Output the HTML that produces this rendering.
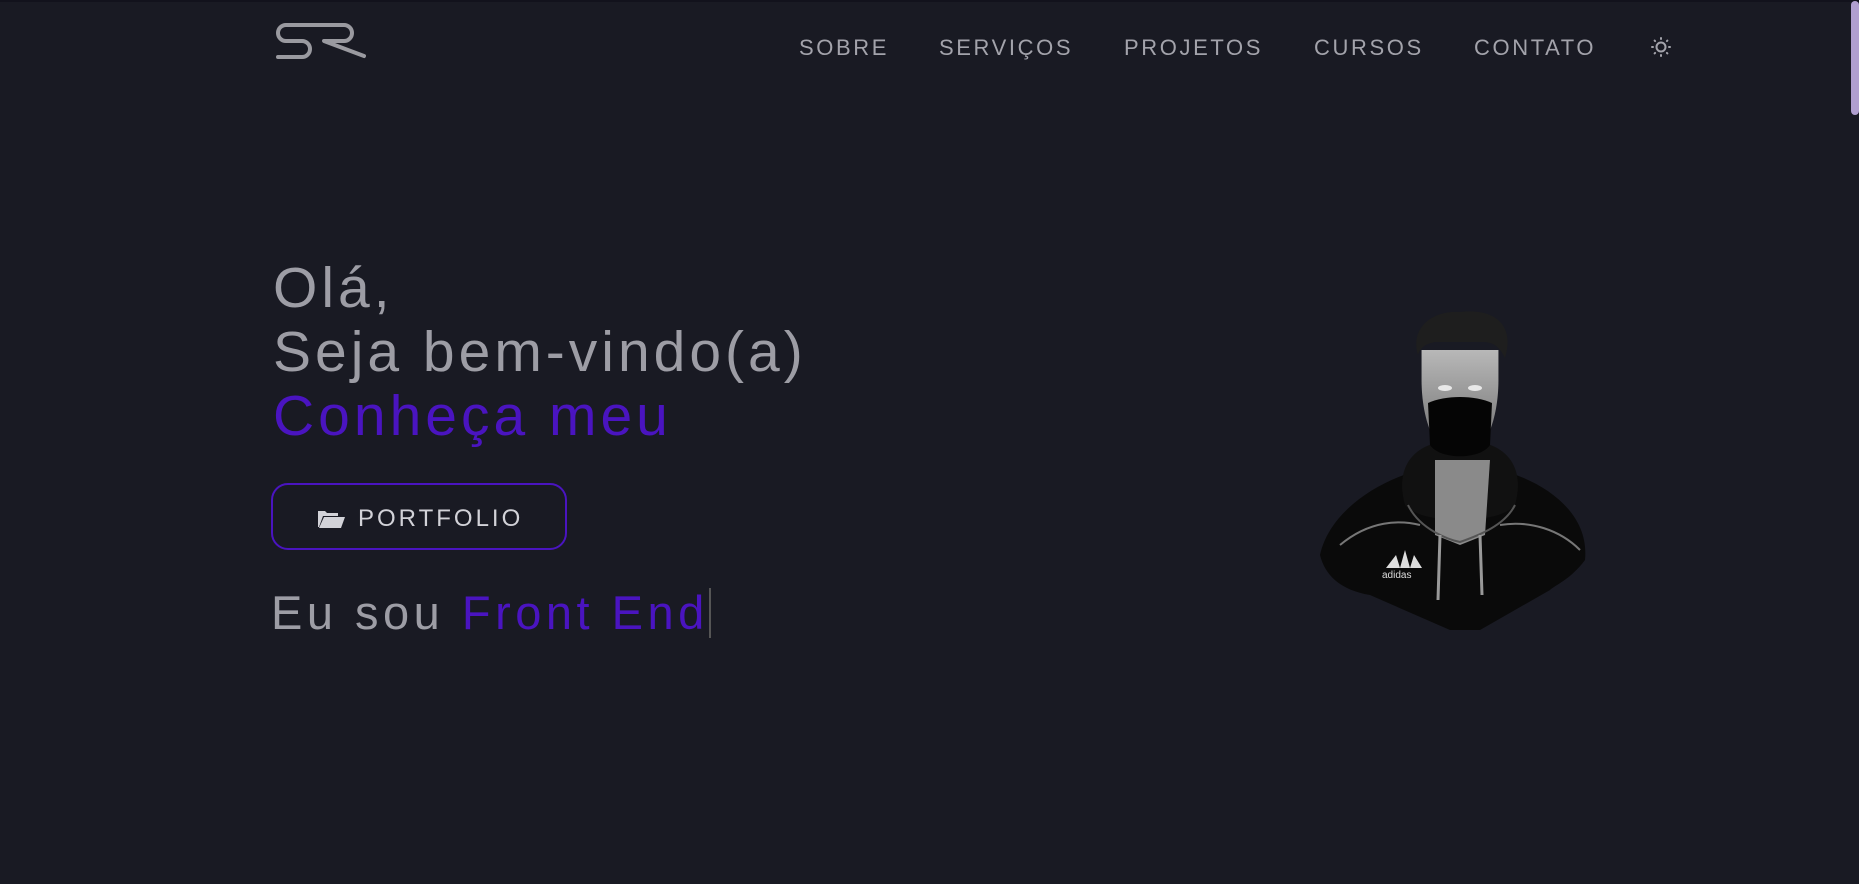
<!DOCTYPE html>
<html><head><meta charset="utf-8">
<style>
html,body{margin:0;padding:0;width:1859px;height:884px;overflow:hidden;background:#191a23;font-family:"Liberation Sans",sans-serif;}
.top{position:absolute;left:0;top:0;width:1859px;height:2px;background:#12121c}
.nav{position:absolute;top:35px;font-size:22px;letter-spacing:2.6px;color:#a3a3ab;}
h1{position:absolute;left:273px;top:256px;margin:0;font-weight:normal;font-size:57px;line-height:64px;color:#9d9da5;letter-spacing:4px}
h1 .p{color:#4a14c0}
.btn{position:absolute;left:271px;top:483px;width:296px;height:67px;border:2px solid #4a14c0;border-radius:17px;box-sizing:border-box;}
.btn span{position:absolute;left:85px;top:20px;font-size:24px;letter-spacing:3px;color:#d2d2d8}
.eu{position:absolute;left:271px;top:585px;font-size:47px;color:#9d9da5;letter-spacing:4.5px}
.eu .p{color:#4a14c0}
.cur{position:absolute;left:709px;top:588px;width:2px;height:50px;background:#555}
.sb{position:absolute;left:1851px;top:1px;width:8px;height:114px;background:#b09fcf;border-radius:4px}
</style></head><body>
<div class="top"></div>
<svg style="position:absolute;left:276px;top:22px" width="90" height="40" viewBox="0 0 90 40">
<path d="M34 3 H10 A8 8 0 0 0 10 19 H26 A8 8 0 0 1 26 35 H2" fill="none" stroke="#9a9aa0" stroke-width="4" stroke-linecap="round"/>
<path d="M34 3 H68 A8 8 0 0 1 68 19 H48 L88 34" fill="none" stroke="#9a9aa0" stroke-width="4" stroke-linecap="round" stroke-linejoin="round"/>
</svg>
<div class="nav" style="left:799px">SOBRE</div>
<div class="nav" style="left:939px">SERVIÇOS</div>
<div class="nav" style="left:1124px">PROJETOS</div>
<div class="nav" style="left:1314px">CURSOS</div>
<div class="nav" style="left:1474px">CONTATO</div>
<svg style="position:absolute;left:1651px;top:37px" width="20" height="20" viewBox="0 0 20 20">
<circle cx="10" cy="10" r="4.5" fill="none" stroke="#a3a3ab" stroke-width="2"/>
<g stroke="#a3a3ab" stroke-width="2" stroke-linecap="round"><path d="M10 1v1M10 18v1M1 10h1M18 10h1M3.6 3.6l.5.5M15.9 15.9l.5.5M3.6 16.4l.5-.5M15.9 4.1l.5-.5"/></g>
</svg>
<h1>Olá,<br>Seja bem-vindo(a)<br><span class="p">Conheça meu</span></h1>
<div class="btn">
<svg style="position:absolute;left:43px;top:22px" width="30" height="22" viewBox="0 0 30 22"><path d="M2 4h7l2 2h11v3H7L3 20H2z" fill="#d2d2d8"/><path d="M8 10h21l-4 11H3z" fill="#d2d2d8"/></svg>
<span>PORTFOLIO</span></div>
<div class="eu">Eu sou <span class="p">Front End</span></div>
<div class="cur"></div>
<svg style="position:absolute;left:1310px;top:310px" width="300" height="320" viewBox="0 0 300 320">
<defs><linearGradient id="f" x1="0" y1="0" x2="0" y2="1"><stop offset="0" stop-color="#b8b8b8"/><stop offset="1" stop-color="#707070"/></linearGradient></defs>
<path d="M10 245 C20 200 70 170 110 160 L190 160 C230 170 280 200 275 250 C260 270 245 275 240 280 L170 320 L140 320 L60 285 C30 280 15 265 10 245Z" fill="#0a0a0a"/>
<path d="M95 195 C85 160 100 130 150 130 C200 130 215 160 205 195 C190 215 110 215 95 195Z" fill="#111"/>
<path d="M125 150 L180 150 L175 225 L150 235 L125 225Z" fill="#8a8a8a"/>
<path d="M98 195 C110 220 140 230 150 232 C170 225 195 215 205 195" stroke="#555" stroke-width="2" fill="none"/>
<path d="M88 70 C88 110 110 140 130 140 L170 140 C190 140 212 110 212 70 L212 40 L88 40Z" fill="url(#f)" transform="translate(150 0) scale(0.62 1) translate(-150 0)"/>
<path d="M108 45 C100 20 120 0 150 2 C185 -2 205 15 195 48 C190 38 185 33 175 32 L125 32 C115 34 110 38 108 45Z" fill="#1e1e1e"/>
<ellipse cx="135" cy="78" rx="7" ry="3" fill="#e8e8e8"/><ellipse cx="165" cy="78" rx="7" ry="3" fill="#e8e8e8"/>
<path d="M118 93 C135 85 165 85 182 93 L180 135 C170 150 130 150 120 135Z" fill="#050505"/>
<path d="M30 235 C60 210 90 210 110 215 M190 215 C220 210 250 220 270 240" stroke="#777" stroke-width="2" fill="none"/>
<path d="M130 225 L128 290 M170 225 L172 285" stroke="#999" stroke-width="3"/>
<text x="72" y="268" font-family="Liberation Sans" font-size="10" fill="#ddd">adidas</text>
<path d="M76 258 L86 245 L90 258 L95 240 L100 258 L104 245 L112 258Z" fill="#ddd"/>
</svg>
<div class="sb"></div>
</body></html>
